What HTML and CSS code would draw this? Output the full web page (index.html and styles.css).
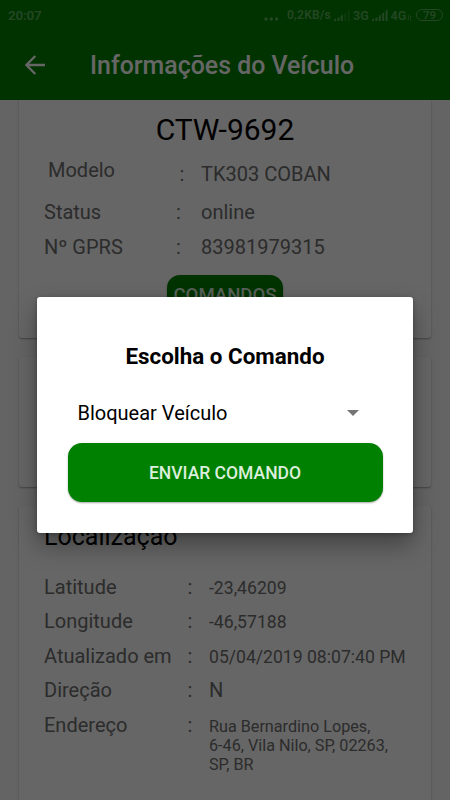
FILE: index.html
```html
<!DOCTYPE html>
<html lang="pt-BR">
<head>
    <meta charset="UTF-8">
    <meta name="viewport" content="width=device-width, initial-scale=1.0">
    <title>Informações do Veículo</title>
    <link rel="stylesheet" href="styles.css">
</head>
<body>

<div class="app">
    <header class="header">
        <div class="status-bar">
            <span class="clock">20:07</span>
            <div class="status-icons">
                <svg class="dots" width="15" height="4" viewBox="0 0 15 4"><circle cx="2" cy="2" r="1.7"/><circle cx="7.3" cy="2" r="1.7"/><circle cx="12.6" cy="2" r="1.7"/></svg>
                <span class="speed">0,2KB/s</span>
                <svg class="signal" width="16" height="12" viewBox="0 0 16 12"><path d="M0 12v-1.5l2-1V12zM3.4 12V9l2-1v4zM6.8 12V7l2-1.4V12z"/><path opacity=".35" d="M10.2 12V4.5l2-1.3V12zM13.6 12V2l2-1.5V12z"/></svg>
                <span class="net net-3g">3G</span>
                <svg class="signal" width="16" height="12" viewBox="0 0 16 12"><path d="M0 12v-1.5l2-1V12zM3.4 12V9l2-1v4zM6.8 12V7l2-1.4V12zM10.2 12V4.5l2-1.3V12zM13.6 12V2l2-1.5V12z"/></svg>
                <span class="net net-4g">4G</span>
                <svg class="arrows" width="5" height="6" viewBox="0 0 5 6"><path d="M1.5 0v5L0 3.5M3.5 6V1L5 2.5"/></svg>
                <span class="battery">79</span>
            </div>
        </div>
        <div class="toolbar">
            <svg class="back" width="20" height="20" viewBox="0 0 20 20"><path d="M20 10H1.7M10.3 1L1.4 10l8.9 9"/></svg>
            <h1>Informações do Veículo</h1>
        </div>
    </header>

    <main class="content">
        <section class="card vehicle">
            <h2>CTW-9692</h2>
            <div class="row row-model">
                <span class="label">Modelo</span><span class="colon">:</span><span class="value">TK303 COBAN</span>
            </div>
            <div class="row">
                <span class="label">Status</span><span class="colon">:</span><span class="value">online</span>
            </div>
            <div class="row">
                <span class="label">Nº GPRS</span><span class="colon">:</span><span class="value">83981979315</span>
            </div>
            <button class="btn btn-commands">COMANDOS</button>
        </section>

        <section class="card empty"></section>

        <section class="card location">
            <h3>Localização</h3>
            <div class="row">
                <span class="label">Latitude</span><span class="colon">:</span><span class="value small">-23,46209</span>
            </div>
            <div class="row">
                <span class="label">Longitude</span><span class="colon">:</span><span class="value small">-46,57188</span>
            </div>
            <div class="row">
                <span class="label">Atualizado em</span><span class="colon">:</span><span class="value small">05/04/2019 08:07:40 PM</span>
            </div>
            <div class="row">
                <span class="label">Direção</span><span class="colon">:</span><span class="value">N</span>
            </div>
            <div class="row">
                <span class="label">Endereço</span><span class="colon">:</span><span class="value address">Rua Bernardino Lopes,<br>6-46, Vila Nilo, SP, 02263,<br>SP, BR</span>
            </div>
        </section>
    </main>
</div>

<div class="overlay">
    <div class="dialog">
        <h2>Escolha o Comando</h2>
        <div class="spinner">
            <span>Bloquear Veículo</span>
            <svg width="12" height="6" viewBox="0 0 12 6"><path d="M0 0h12L6 6z"/></svg>
        </div>
        <button class="btn btn-send">ENVIAR COMANDO</button>
    </div>
</div>

</body>
</html>
```
FILE: styles.css
```css
* {
    box-sizing: border-box;
}

body {
    margin: 0;
    font-family: Roboto, sans-serif;
    background-color: #fafafa;
    overflow: hidden;
}

h1, h2, h3 {
    margin: 0;
    font-weight: 400;
}

.app {
    height: 800px;
    overflow: hidden;
    color: #6e6e6e;
}

/* header */
.header {
    height: 100px;
    background-color: #008000;
    color: #fff;
}

.status-bar {
    height: 30px;
    padding: 0 7px 0 8px;
    display: flex;
    justify-content: space-between;
    align-items: center;
    color: #5cb05c;
    font-size: 12px;
    font-weight: 600;
}

.clock {
    font-size: 13.3px;
    letter-spacing: -0.1px;
}

.status-icons {
    display: flex;
    align-items: center;
}

.status-icons svg {
    fill: currentColor;
}

.dots {
    margin: 8px 8px 0 0;
}

.speed {
    width: 47px;
    letter-spacing: 0.2px;
}

.signal {
    margin-right: 3px;
}

.net-3g {
    width: 18.5px;
    font-size: 12.5px;
}

.net-4g {
    width: 16.5px;
    font-size: 12.5px;
}

.status-icons .arrows {
    fill: none;
    stroke: currentColor;
    stroke-width: 0.6;
    margin: 5px 4px 0 0;
}

.battery {
    width: 27px;
    height: 12px;
    border: 1px solid currentColor;
    border-radius: 6px;
    font-size: 11.5px;
    line-height: 10px;
    text-align: center;
}

.toolbar {
    height: 70px;
    padding: 0 25px;
    display: flex;
    align-items: center;
}

.back {
    margin-right: 45px;
    fill: none;
    stroke: #fff;
    stroke-width: 2.3;
}

.toolbar h1 {
    font-size: 24.9px;
    font-weight: 500;
    line-height: 30px;
    padding-top: 2px;
}

/* cards */
.content {
    padding: 0 19px;
}

.card {
    background-color: #fff;
    border-radius: 3px;
    box-shadow: 0 1px 2px rgba(0, 0, 0, 0.35);
    padding: 0 25px;
    margin-bottom: 19px;
}

.vehicle {
    height: 238px;
    padding-top: 12px;
    border-radius: 0 0 3px 3px;
    clip-path: inset(0 -5px -5px -5px);
}

.vehicle h2 {
    color: #000;
    font-size: 30px;
    line-height: 36px;
    text-align: center;
}

.row {
    display: flex;
    align-items: flex-start;
    height: 34.6px;
    font-size: 20px;
    line-height: 24px;
}

.vehicle .label {
    width: 132px;
}

.vehicle .colon {
    width: 25px;
}

.vehicle .row-model {
    height: 52px;
    padding-top: 14px;
}

.row-model .label {
    padding-left: 4px;
    margin-top: -4px;
}

.vehicle .row-model .label {
    width: 135.5px;
}

.vehicle .row-model .colon {
    width: 21.5px;
}

.btn {
    display: block;
    border: 0;
    padding: 0;
    background-color: #008000;
    color: #dceedc;
    font-family: inherit;
    font-weight: 500;
    box-shadow: 0 1px 2px rgba(0, 0, 0, 0.35);
}

.btn-commands {
    width: 116px;
    height: 40px;
    margin: 6px 0 0 123px;
    border-radius: 13px;
    font-size: 18.6px;
}

.empty {
    height: 130px;
}

.location {
    height: 320px;
    padding-top: 16px;
}

.location h3 {
    color: #000;
    font-size: 25px;
    line-height: 30px;
    margin-bottom: 22.6px;
}

.location .label {
    width: 143.5px;
}

.location .colon {
    width: 21.5px;
}

.location .small {
    font-size: 17.6px;
    padding-top: 1px;
}

.location .address {
    font-size: 16.2px;
    line-height: 19.2px;
    padding-top: 4px;
    white-space: nowrap;
}

/* command dialog */
.overlay {
    position: absolute;
    top: 0;
    left: 0;
    width: 450px;
    height: 800px;
    padding: 29px 1px 0 0;
    display: flex;
    align-items: center;
    justify-content: center;
    background-color: rgba(0, 0, 0, 0.6);
}

.dialog {
    width: 376px;
    height: 236px;
    padding: 44px 30px 0 31px;
    background-color: #fff;
    border-radius: 3px;
    box-shadow: 0 12px 24px rgba(0, 0, 0, 0.35), 0 1px 4px rgba(0, 0, 0, 0.25);
    color: #000;
}

.dialog h2 {
    font-size: 22.4px;
    font-weight: 700;
    line-height: 30px;
    text-align: center;
}

.spinner {
    height: 60px;
    margin-top: 12px;
    padding: 0 24px 0 10px;
    display: flex;
    align-items: center;
    justify-content: space-between;
    font-size: 20px;
}

.spinner svg {
    fill: #757575;
}

.btn-send {
    width: 315px;
    height: 59px;
    padding-top: 2px;
    border-radius: 14px;
    font-size: 17.5px;
}
```
